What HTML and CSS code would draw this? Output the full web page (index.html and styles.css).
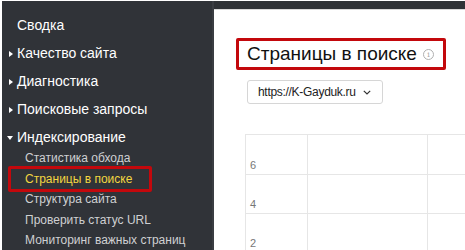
FILE: index.html
```html
<!DOCTYPE html>
<html lang="ru">
<head>
<meta charset="utf-8">
<link rel="stylesheet" href="styles.css">
</head>
<body>
<div class="page">
  <nav class="sidebar">
    <div class="nav-item">Сводка</div>
    <div class="nav-item"><span class="tri tri-right"></span>Качество сайта</div>
    <div class="nav-item"><span class="tri tri-right"></span>Диагностика</div>
    <div class="nav-item"><span class="tri tri-right"></span>Поисковые запросы</div>
    <div class="nav-item"><span class="tri tri-down"></span>Индексирование</div>
    <ul class="sub">
      <li>Статистика обхода</li>
      <li class="active"><span class="mark">Страницы в поиске</span></li>
      <li>Структура сайта</li>
      <li>Проверить статус URL</li>
      <li>Мониторинг важных страниц</li>
    </ul>
  </nav>
  <main class="main">
    <div class="topbar"></div>
    <div class="content">
      <h1 class="title">Страницы в поиске <span class="info">i</span></h1>
      <div class="select"><span class="sel-text">https://K-Gayduk.ru</span><svg class="chev" width="8" height="5" viewBox="0 0 8 5"><path d="M0.8 0.8 L4 4 L7.2 0.8" fill="none" stroke="#333" stroke-width="1.2"/></svg></div>
      <div class="chart">
        <div class="cell first"><span class="lbl">6</span></div>
        <div class="cell"></div>
        <div class="cell"></div>
        <div class="cell first"><span class="lbl">4</span></div>
        <div class="cell"></div>
        <div class="cell"></div>
        <div class="cell first"><span class="lbl">2</span></div>
        <div class="cell"></div>
        <div class="cell"></div>
      </div>
    </div>
  </main>
</div>
</body>
</html>
```

FILE: styles.css
```css
html, body {
  margin: 0;
  padding: 0;
  background: #fff;
}
body {
  font-family: "Liberation Sans", Arial, sans-serif;
  width: 465px;
  height: 250px;
  overflow: hidden;
}
.page {
  display: flex;
  height: 249px;
  margin-top: 1px;
  margin-left: 2px;
}
.sidebar {
  flex: none;
  width: 212px;
  box-sizing: border-box;
  background: #303338;
  border-right: 2px solid #3a3d42;
  padding-top: 10px;
}
.nav-item {
  position: relative;
  color: #fff;
  font-size: 14px;
  line-height: 28px;
  padding-left: 15px;
}
.tri {
  position: absolute;
  left: 7px;
  top: 12px;
  width: 0;
  height: 0;
}
.tri-right {
  border-top: 3px solid transparent;
  border-bottom: 3px solid transparent;
  border-left: 4px solid #fff;
}
.tri-down {
  left: 5px;
  top: 13px;
  border-left: 3px solid transparent;
  border-right: 3px solid transparent;
  border-top: 4px solid #fff;
}
.sub {
  list-style: none;
  margin: -3px 0 0;
  padding: 0 0 0 23px;
}
.sub li {
  color: #cfd0d2;
  font-size: 12px;
  line-height: 20.5px;
}
.sub li.active {
  color: #f2d641;
}
.mark {
  position: relative;
}
.mark::after {
  content: "";
  position: absolute;
  left: -17px;
  right: -20px;
  top: -6px;
  bottom: -6px;
  border: 3px solid #c3080c;
  border-radius: 2px;
}
.main {
  flex: 1;
  display: flex;
  flex-direction: column;
  min-width: 0;
  overflow: hidden;
}
.topbar {
  flex: none;
  height: 8px;
  background: #2f3236;
  border-bottom: 1px solid #d9d9d9;
}
.content {
  padding: 28px 0 0 31px;
}
.title {
  display: inline-flex;
  align-items: center;
  margin: 0 0 0 -9px;
  font-weight: normal;
  font-size: 19px;
  line-height: 26px;
  color: #111;
  border: 3px solid #c3080c;
  border-radius: 2px;
  padding: 0 9px 0 8px;
}
.info {
  display: inline-flex;
  align-items: center;
  justify-content: center;
  width: 9px;
  height: 9px;
  margin-left: 6px;
  border: 1px solid #b0b0b0;
  border-radius: 50%;
  color: #a8a8a8;
  font-size: 8px;
  line-height: 9px;
  font-family: "DejaVu Serif", serif;
}
.select {
  display: flex;
  align-items: center;
  width: 136px;
  height: 24px;
  box-sizing: border-box;
  margin: 10px 0 0 2px;
  padding-left: 10px;
  border: 1px solid #d6d6d6;
  border-radius: 3px;
  font-size: 12px;
  letter-spacing: -0.3px;
  color: #222;
}
.sel-text {
  white-space: nowrap;
  flex: none;
}
.chev {
  flex: none;
  margin-left: 7px;
}
.chart {
  display: grid;
  grid-template-columns: 62px 120px 1fr;
  grid-template-rows: 40px 39px 39px;
  margin-top: 30px;
  border-top: 1px solid #e6e6e6;
}
.cell {
  display: flex;
  align-items: flex-end;
  border-left: 1px solid #e6e6e6;
  border-bottom: 1px solid #e6e6e6;
}
.lbl {
  font-size: 11px;
  color: #777;
  padding-left: 4px;
  line-height: 14px;
  margin-bottom: 2px;
}
```
